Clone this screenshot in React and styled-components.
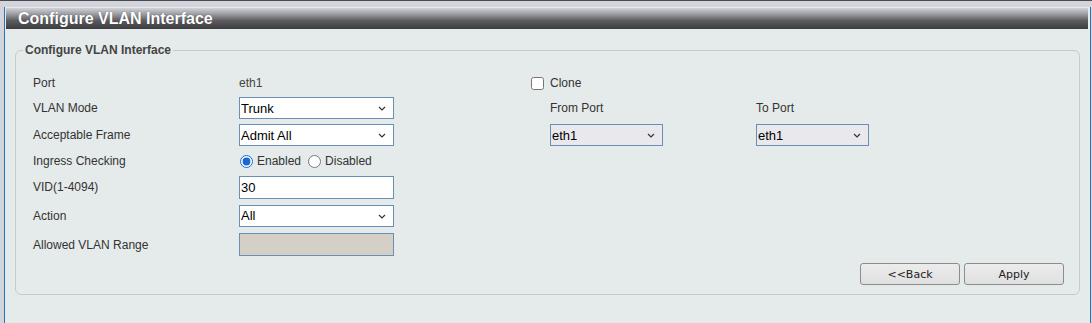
import React from 'react';
import styled, { createGlobalStyle } from 'styled-components';

const GlobalStyle = createGlobalStyle`
  html, body {
    margin: 0;
    padding: 0;
    background: #cfd0d8;
  }
  body {
    font-family: "Liberation Sans", Arial, sans-serif;
  }
`;

const Page = styled.div`
  box-sizing: border-box;
  height: 323px;
  border-top: 1px solid #4b4b4f;
  padding: 6px 1px 0 4px;
  background: #d3d4dc;
`;

const Frame = styled.div`
  box-sizing: border-box;
  height: 100%;
  border-left: 1px solid #2474b8;
  border-right: 1px solid #2474b8;
  background: #e5eaea;
  padding: 1px 2px 0 1px;
`;

const TitleBar = styled.div`
  height: 21px;
  padding-left: 12px;
  display: flex;
  align-items: center;
  background: linear-gradient(#d2d2da 0%, #9a9aa0 30%, #5c5c60 60%, #3d3d3f 100%);
  color: #fff;
  font-size: 16px;
  font-weight: bold;
  text-shadow: 0 0 1px rgba(0, 0, 0, 0.5);
`;

const Fieldset = styled.fieldset`
  margin: 14px 8px 0 9px;
  padding: 14px 15px 9px 17px;
  border: 1px solid #c6cacb;
  border-radius: 6px;
`;

const Legend = styled.legend`
  margin-left: -10px;
  padding: 0 2px;
  font-size: 12px;
  line-height: 14px;
  font-weight: bold;
  color: #444;
`;

const FormGrid = styled.div`
  display: grid;
  grid-template-columns: 206px 292px 225px 1fr;
  grid-template-rows: 24px 26px 28px 24px 28px 29px 29px;
  align-items: center;
`;

const Label = styled.div`
  font-size: 12px;
  color: #333;
  padding-left: ${p => (p.$indent ? '19px' : '0')};
`;

const Value = styled.div`
  font-size: 12px;
  color: #444;
`;

const SelectWrap = styled.div`
  position: relative;
  width: ${p => p.$width}px;
  height: 22px;
  margin-left: ${p => (p.$indent ? '19px' : '0')};
`;

const Select = styled.select`
  appearance: none;
  box-sizing: border-box;
  width: 100%;
  height: 100%;
  margin: 0;
  padding: 0 0 0 1px;
  border: 1px solid #6a8eb4;
  border-radius: 0;
  background: ${p => (p.$muted ? '#e9e9ed' : '#fff')};
  font-family: "Liberation Sans", Arial, sans-serif;
  font-size: 13px;
  color: #000;
  outline: none;
`;

const Chevron = styled.svg`
  position: absolute;
  right: 8px;
  top: 9px;
  pointer-events: none;
`;

const TextInput = styled.input`
  box-sizing: border-box;
  width: 155px;
  height: 23px;
  margin: 0;
  padding: 0 0 0 1px;
  border: 1px solid #6a8eb4;
  background: ${p => (p.disabled ? '#d4d0c8' : '#fff')};
  font-family: "Liberation Sans", Arial, sans-serif;
  font-size: 13px;
  color: #000;
  outline: none;
`;

const RadioGroup = styled.div`
  display: flex;
  align-items: center;
  font-size: 12px;
  color: #333;
`;

const RadioLabel = styled.label`
  display: flex;
  align-items: center;
  margin-right: 6px;
`;

const Radio = styled.input`
  width: 13px;
  height: 13px;
  margin: 0 4px 0 1px;
  accent-color: #1967d2;
`;

const CheckRow = styled.label`
  display: flex;
  align-items: center;
  font-size: 12px;
  color: #333;
`;

const Check = styled.input`
  width: 13px;
  height: 13px;
  margin: 0 6px 0 0;
`;

const Actions = styled.div`
  display: flex;
  justify-content: flex-end;
  gap: 4px;
  margin-top: 4px;
`;

const Button = styled.button`
  width: 100px;
  height: 22px;
  padding: 0;
  border: 1px solid #8c8c8c;
  border-radius: 3px;
  background: linear-gradient(#ececec, #e0e0e0);
  font-family: "DejaVu Sans", Tahoma, sans-serif;
  font-size: 11px;
  color: #222;
`;

const Dropdown = ({ value, width = 155, muted, indent }) => (
  <SelectWrap $width={width} $indent={indent}>
    <Select $muted={muted} defaultValue={value}>
      <option>{value}</option>
    </Select>
    <Chevron width="8" height="5" viewBox="0 0 8 5">
      <path d="M1 1l3 3 3-3" fill="none" stroke="#333" strokeWidth="1.2" />
    </Chevron>
  </SelectWrap>
);

export default function App() {
  return (
    <>
      <GlobalStyle />
      <Page>
        <Frame>
          <TitleBar>Configure VLAN Interface</TitleBar>
          <Fieldset>
            <Legend>Configure VLAN Interface</Legend>
            <FormGrid>
              <Label>Port</Label>
              <Value>eth1</Value>
              <CheckRow>
                <Check type="checkbox" />
                Clone
              </CheckRow>
              <div />

              <Label>VLAN Mode</Label>
              <Dropdown value="Trunk" />
              <Label $indent>From Port</Label>
              <Label>To Port</Label>

              <Label>Acceptable Frame</Label>
              <Dropdown value="Admit All" />
              <Dropdown value="eth1" width={113} muted indent />
              <Dropdown value="eth1" width={113} muted />

              <Label>Ingress Checking</Label>
              <RadioGroup>
                <RadioLabel>
                  <Radio type="radio" name="ingress" defaultChecked />
                  Enabled
                </RadioLabel>
                <RadioLabel>
                  <Radio type="radio" name="ingress" />
                  Disabled
                </RadioLabel>
              </RadioGroup>
              <div />
              <div />

              <Label>VID(1-4094)</Label>
              <TextInput defaultValue="30" />
              <div />
              <div />

              <Label>Action</Label>
              <Dropdown value="All" />
              <div />
              <div />

              <Label>Allowed VLAN Range</Label>
              <TextInput disabled />
              <div />
              <div />
            </FormGrid>
            <Actions>
              <Button>&lt;&lt;Back</Button>
              <Button>Apply</Button>
            </Actions>
          </Fieldset>
        </Frame>
      </Page>
    </>
  );
}
